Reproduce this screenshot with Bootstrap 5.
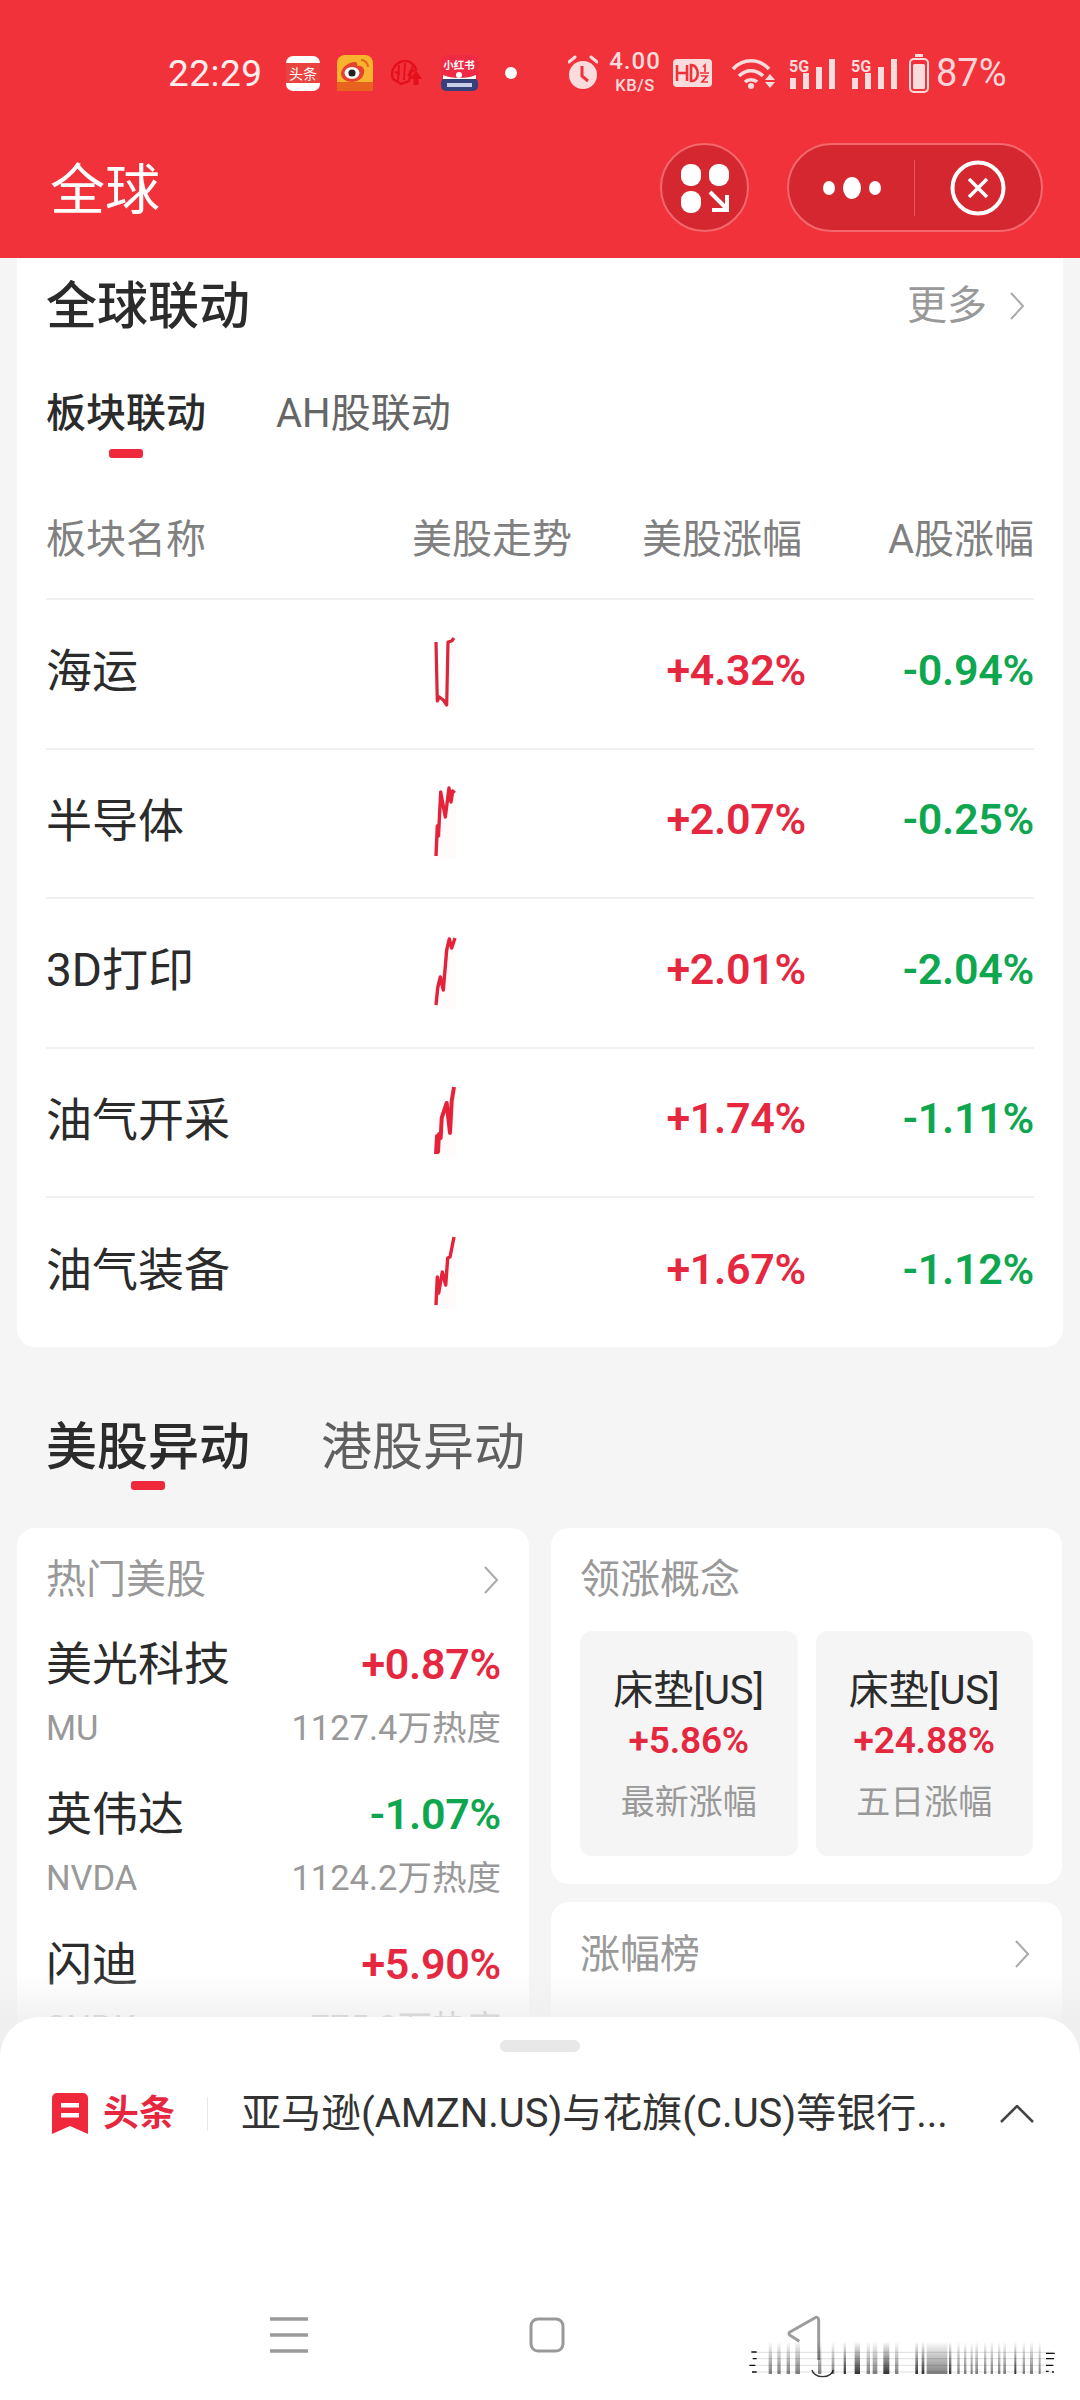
<!DOCTYPE html>
<html lang="zh-CN">
<head>
<meta charset="utf-8">
<title>全球</title>
<link rel="stylesheet" href="https://cdn.jsdelivr.net/npm/bootstrap@5.3.0/dist/css/bootstrap.min.css">
<style>
html,body{width:1080px;height:2400px;overflow:hidden}
body{position:relative;background:#f5f5f5;font-family:Roboto,"Noto Sans CJK SC",sans-serif;color:#333}
.hdr{background:#f1323b;height:258px;color:#fff}
.stat{height:143px;padding:3px 0 0 168px;color:#fff}
.clock{font-size:37px;width:118px;line-height:1;letter-spacing:.5px;color:#fdeeee}
.sico{display:block;flex:none}
.netb{width:52px;margin:0 12px 0 11px;text-align:center;color:#fbdcdc;font-weight:500}
.netb b{display:block;font-size:24px;line-height:25px;letter-spacing:1px;font-weight:500}
.netb i{display:block;font-size:16.5px;line-height:23px;letter-spacing:.5px;font-style:normal;font-weight:500}
.pct{font-size:38px;line-height:1;color:#fbd6d8;margin-left:7px}
.ttl{padding:0 37px 0 50px;height:89px}
.ttl h1{font-size:55px;font-weight:400;margin:6px 0 0;line-height:1;color:#fff}
.cbtn{width:89px;height:89px;background:#d4272f;border:2px solid #f4686d;border-radius:50%}
.capsule{width:256px;height:89px;background:#d4272f;border:2px solid #f4686d;border-radius:45px;margin-left:38px}
.capsep{width:1px;height:56px;background:#e7565b}
.panel{background:#fff;margin:0 17px;border-radius:0 0 18px 18px;height:1089px;padding:0 29px}
.phead{height:96px}
.phead h2{font-size:51px;font-weight:500;color:#2b2b2b;margin:0;line-height:1}
.more{font-size:40px;color:#999;line-height:1;gap:22px;margin-right:9px}
.tabline{height:120px;gap:70px}
.tabit{font-size:40px;line-height:1;color:#666;position:relative}
.tabit.on{color:#2b2b2b;font-weight:500}
.tabit.on::after{content:"";position:absolute;left:50%;bottom:-24px;width:34px;height:9px;margin-left:-17px;border-radius:3px;background:#f0283c}
.thead{height:126px;padding-top:8px;font-size:40px;color:#808080;border-bottom:2px solid #f0f0f0}
.thead .c3{padding-right:4px}
.trow{height:149.5px;border-bottom:2px solid #f0f0f0}
.trow:last-child{border-bottom:0}
.c1{width:360px}
.c2{width:166px}
.c3{width:234px;text-align:right}
.c4{width:228px;text-align:right}
.trow .c1{font-size:46px;color:#2b2b2b;line-height:1;margin-bottom:5px}
.trow .c3,.trow .c4{font-size:43px;font-weight:600;line-height:1;letter-spacing:-.3px;margin-bottom:7px}
.up{color:#e5283f}
.down{color:#0ea750}
.spk{display:block;margin-left:14px}
.mkt{padding:20px 46px 0;height:181px;gap:71px}
.mkt span{font-size:51px;line-height:1;color:#5f5f5f;position:relative}
.mkt span.on{color:#2b2b2b;font-weight:500}
.mkt span.on::after{content:"";position:absolute;left:50%;bottom:-17px;width:34px;height:9px;margin-left:-17px;border-radius:3px;background:#f0283c}
.cols{padding:0 18px 0 17px;gap:22px}
.lcard{width:512px;background:#fff;border-radius:18px 18px 0 0;height:520px;padding:0 28px 0 29px}
.rside{width:511px}
.rcard{background:#fff;border-radius:18px;height:356px;padding:0 29px}
.rcard2{background:#fff;border-radius:18px 18px 0 0;height:200px;margin-top:18px;padding:33px 32px 0 29px}
.ch{font-size:40px;color:#999;line-height:1}
.lhead{height:104px;margin-bottom:7px;padding-right:2px}
.stock{height:150px;padding-top:2px}
.stock .nm{font-size:46px;line-height:1;color:#2b2b2b}
.stock .vl{font-size:43px;line-height:1;font-weight:600;letter-spacing:-.3px}
.stock .sub{font-size:34.5px;line-height:1;color:#999;margin-top:24px}
.rhead{height:103px}
.tiles{gap:18px}
.tile{width:218px;height:225px;background:#f5f5f5;border-radius:12px;padding-top:40px;text-align:center}
.tile .a{font-size:40px;line-height:1;color:#2b2b2b}
.tile .b{font-size:37px;line-height:1;font-weight:600;margin-top:11px;letter-spacing:-.2px}
.tile .c{font-size:34px;line-height:1;color:#999;margin-top:26px}
.shade{position:absolute;left:0;right:0;top:1975px;height:80px;background:linear-gradient(rgba(238,238,238,0),rgba(238,238,238,.8) 55%)}
.sheet{position:absolute;left:0;right:0;top:2017px;height:383px;background:#fff;border-radius:40px 40px 0 0}
.grip{width:80px;height:12px;background:#e8e8e8;border-radius:6px;margin:23px auto 0}
.news{height:124px;padding:0 46px 0 52px}
.tt{color:#e5283f;font-size:36px;font-weight:700;line-height:1;margin-left:15px;width:104px}
.vsep{width:1px;height:34px;background:#e8e8e8;margin-right:33px}
.ntx{font-size:40px;line-height:1;color:#333;width:759px;white-space:nowrap}
.navb{position:absolute;left:0;top:300px;width:100%}
.wmark{position:absolute;left:740px;top:2300px}
</style>
</head>
<body>
<header class="hdr">
  <div class="stat d-flex align-items-center">
    <span class="clock">22:29</span>
    <svg class="sico" width="34" height="35" viewBox="0 0 34 35"><rect width="34" height="35" rx="7" fill="#fff"/><rect y="7" width="34" height="20" fill="#e9433f"/><text x="17" y="23" font-size="14" font-family="Noto Sans CJK SC" fill="#fff" text-anchor="middle">头条</text></svg>
    <svg class="sico" style="margin-left:17px" width="36" height="36" viewBox="0 0 36 36"><rect width="36" height="36" rx="8" fill="#f9b42d"/><rect y="27" width="36" height="9" fill="#e8641e"/><path d="M4 19c0-6 7-12 14-12 2 0 3 2 2 4 5-1 8 2 7 7-1 6-7 9-12 9S4 24 4 19z" fill="#e6432f"/><ellipse cx="15" cy="18" rx="7.5" ry="6" fill="#fff"/><circle cx="15" cy="18" r="3.6" fill="#222"/><path d="M24 5a7 7 0 0 1 7 7" stroke="#e8641e" stroke-width="2" fill="none"/></svg>
    <svg class="sico" style="margin-left:17px" width="33" height="27" viewBox="0 0 33 27"><path d="M3 19C0 11 5 3 13 1c6-1 11 3 13 8l-5 3-2 9-8 3z" fill="none" stroke="#e4101c" stroke-width="2.4"/><path d="M8 21 9 5M14 20l1-17M18 16l5-10M5 12l5 2" stroke="#e4101c" stroke-width="2"/><path d="M26 10l6 9h-3.5v6h-5v-6H20z" fill="#e4101c"/></svg>
    <svg class="sico" style="margin-left:18px" width="37" height="36" viewBox="0 0 37 36"><rect width="37" height="36" rx="7" fill="#ee2a44"/><rect y="23" width="37" height="13" rx="5" fill="#36407a"/><path d="M2 20c8 4 25 4 33 0v4H2z" fill="#fff"/><circle cx="18" cy="20" r="3" fill="#fff"/><text x="18" y="14" font-size="10.5" font-weight="700" font-family="Noto Sans CJK SC" fill="#fff" text-anchor="middle">小红书</text><rect x="6" y="28" width="25" height="4" fill="#c9cde6"/></svg>
    <svg class="sico" style="margin-left:27px" width="12" height="12" viewBox="0 0 12 12"><circle cx="6" cy="6" r="6" fill="#fff"/></svg>
    <svg class="sico" style="margin-left:51px" width="30" height="36" viewBox="0 0 30 36"><path d="M1 7 7 2M29 7l-6-5" stroke="#fbdcdc" stroke-width="3" stroke-linecap="round"/><circle cx="15" cy="20" r="14" fill="#fbdcdc"/><path d="M14 11v10l6 5" stroke="#f1323b" stroke-width="3" fill="none"/></svg>
    <div class="netb"><b>4.00</b><i>KB/S</i></div>
    <svg class="sico" width="39" height="28" viewBox="0 0 39 28"><rect width="39" height="28" rx="4" fill="#fbdcdc"/><path d="M4 6v16M14 6v16M4 14h10M18 6v16c9 1 9-16 0-16z" stroke="#f1323b" stroke-width="2.6" fill="none"/><path d="M30 8l2-2v7M27 14h9M28 17h6l-5 6h6" stroke="#f1323b" stroke-width="1.7" fill="none"/></svg>
    <svg class="sico" style="margin-left:19px" width="45" height="31" viewBox="0 0 45 31"><path d="M2 11c10-11 26-11 36 0M8 18c7-7 17-7 24 0M14 24c3-3 9-3 12 0" stroke="#fbdcdc" stroke-width="3.6" fill="none"/><circle cx="20" cy="28" r="3" fill="#fbdcdc"/><path d="M39 16l5 6H34zM34 24h10l-5 6z" fill="#fbdcdc"/></svg>
    <svg class="sico" style="margin-left:13px" width="47" height="36" viewBox="0 0 47 36"><text x="0" y="17" font-size="16" font-weight="700" font-family="Roboto" fill="#fbdcdc">5G</text><rect x="1" y="23" width="6" height="11" fill="#fbdcdc"/><rect x="14" y="18" width="6" height="16" fill="#fbdcdc"/><rect x="27" y="12" width="6" height="22" fill="#fbdcdc"/><rect x="40" y="4" width="6" height="30" fill="#fbdcdc"/></svg>
    <svg class="sico" style="margin-left:15px" width="47" height="36" viewBox="0 0 47 36"><text x="0" y="17" font-size="16" font-weight="700" font-family="Roboto" fill="#fbdcdc">5G</text><rect x="1" y="23" width="6" height="11" fill="#fbdcdc"/><rect x="14" y="18" width="6" height="16" fill="#fbdcdc"/><rect x="27" y="12" width="6" height="22" fill="#fbdcdc"/><rect x="40" y="4" width="6" height="30" fill="#fbdcdc"/></svg>
    <svg class="sico" style="margin-left:11px" width="20" height="39" viewBox="0 0 20 39"><rect x="6" y="0" width="8" height="3" fill="#fbdcdc"/><rect x="1" y="5" width="18" height="33" rx="4" fill="none" stroke="#fbdcdc" stroke-width="2"/><rect x="4" y="10" width="12" height="25" rx="1.5" fill="#fbdcdc"/></svg>
    <span class="pct">87%</span>
  </div>
  <div class="ttl d-flex align-items-center">
    <h1 class="flex-grow-1">全球</h1>
    <div class="cbtn d-flex align-items-center justify-content-center">
      <svg width="50" height="50" viewBox="0 0 50 50"><rect x="1" y="1" width="20" height="22" rx="9" fill="#fff"/><rect x="29" y="1" width="20" height="22" rx="9" fill="#fff"/><rect x="1" y="28" width="20" height="22" rx="9" fill="#fff"/><path d="M30 29l16 16M47 32v15H32" stroke="#fff" stroke-width="4" fill="none"/></svg>
    </div>
    <div class="capsule d-flex align-items-center">
      <svg style="margin:0 33px 0 34px" width="58" height="24" viewBox="0 0 58 24"><ellipse cx="6" cy="12" rx="6" ry="7" fill="#fff"/><ellipse cx="29" cy="12" rx="9" ry="11" fill="#fff"/><ellipse cx="52" cy="12" rx="6" ry="7" fill="#fff"/></svg>
      <span class="capsep"></span>
      <svg style="margin-left:35px" width="56" height="56" viewBox="0 0 56 56"><circle cx="28" cy="28" r="25.5" stroke="#fff" stroke-width="4" fill="none"/><path d="M19 19l18 18M37 19 19 37" stroke="#fff" stroke-width="3.5"/></svg>
    </div>
  </div>
</header>

<section class="panel">
  <div class="phead d-flex align-items-center justify-content-between">
    <h2>全球联动</h2>
    <div class="more d-flex align-items-center">更多<svg width="16" height="30" viewBox="0 0 16 30"><path d="M2 2l12 13L2 28" stroke="#aaa" stroke-width="2" fill="none"/></svg></div>
  </div>
  <div class="tabline d-flex align-items-center">
    <span class="tabit on">板块联动</span>
    <span class="tabit">AH股联动</span>
  </div>
  <div class="thead d-flex align-items-center">
    <div class="c1">板块名称</div><div class="c2 text-end">美股走势</div><div class="c3">美股涨幅</div><div class="c4">A股涨幅</div>
  </div>
  <div class="trow d-flex align-items-center">
    <div class="c1">海运</div>
    <div class="c2"><svg class="spk" width="60" height="100" viewBox="0 0 60 100"><polygon points="16,18 17.3,77 26.7,81 28,18 36,14 36,86 16,86" fill="#fde9ea" opacity=".2"/><polyline points="16,18 17.3,77 19.3,73 23.3,76 26.7,81 28,18 31.7,17 34,14" fill="none" stroke="#d9263a" stroke-width="3.2" stroke-linejoin="round"/></svg></div>
    <div class="c3 up">+4.32%</div><div class="c4 down">-0.94%</div>
  </div>
  <div class="trow d-flex align-items-center">
    <div class="c1">半导体</div>
    <div class="c2"><svg class="spk" width="60" height="100" viewBox="0 0 60 100"><polygon points="16,83 20.7,19 29,15 36,20 36,86 16,86" fill="#fde9ea" opacity=".2"/><polyline points="16,83 17.3,53 18.5,63 20.7,19 25.3,44 29,15 31,29 32.7,18 34.7,20" fill="none" stroke="#e4233a" stroke-width="3.4" stroke-linejoin="round"/></svg></div>
    <div class="c3 up">+2.07%</div><div class="c4 down">-0.25%</div>
  </div>
  <div class="trow d-flex align-items-center">
    <div class="c1">3D打印</div>
    <div class="c2"><svg class="spk" width="60" height="100" viewBox="0 0 60 100"><polygon points="16,82 20,54 27,27 36,15 36,86 16,86" fill="#fde9ea" opacity=".2"/><polyline points="16,82 17.7,65 20.3,54 23.3,67 26.7,27 29.3,16 31.7,25 35,15" fill="none" stroke="#e4233a" stroke-width="3.4" stroke-linejoin="round"/></svg></div>
    <div class="c3 up">+2.01%</div><div class="c4 down">-2.04%</div>
  </div>
  <div class="trow d-flex align-items-center">
    <div class="c1">油气开采</div>
    <div class="c2"><svg class="spk" width="60" height="100" viewBox="0 0 60 100"><polygon points="16,82 20.7,62 26.7,31 36,15 36,86 16,86" fill="#fde9ea" opacity=".2"/><polyline points="16,82 17,64 18,80 19,62 20.7,66 21.7,46 26.7,31 28.3,46 30,61 31.7,29 34,15" fill="none" stroke="#e4233a" stroke-width="4" stroke-linejoin="round"/></svg></div>
    <div class="c3 up">+1.74%</div><div class="c4 down">-1.11%</div>
  </div>
  <div class="trow d-flex align-items-center">
    <div class="c1">油气装备</div>
    <div class="c2"><svg class="spk" width="60" height="100" viewBox="0 0 60 100"><polygon points="16,82 22.3,49 30,34 36,14 36,86 16,86" fill="#fde9ea" opacity=".2"/><polyline points="16,82 17.3,54 18.7,70 22.3,49 25.7,62 27.7,35 30,34 34,14" fill="none" stroke="#e4233a" stroke-width="3.4" stroke-linejoin="round"/></svg></div>
    <div class="c3 up">+1.67%</div><div class="c4 down">-1.12%</div>
  </div>
</section>

<div class="mkt d-flex align-items-center">
  <span class="on">美股异动</span>
  <span>港股异动</span>
</div>

<div class="cols d-flex">
  <div class="lcard">
    <div class="lhead d-flex align-items-center justify-content-between ch">热门美股<svg width="16" height="30" viewBox="0 0 16 30"><path d="M2 2l12 13L2 28" stroke="#aaa" stroke-width="2" fill="none"/></svg></div>
    <div class="stock"><div class="d-flex align-items-center justify-content-between"><span class="nm">美光科技</span><span class="vl up">+0.87%</span></div><div class="sub d-flex justify-content-between"><span>MU</span><span>1127.4万热度</span></div></div>
    <div class="stock"><div class="d-flex align-items-center justify-content-between"><span class="nm">英伟达</span><span class="vl down">-1.07%</span></div><div class="sub d-flex justify-content-between"><span>NVDA</span><span>1124.2万热度</span></div></div>
    <div class="stock"><div class="d-flex align-items-center justify-content-between"><span class="nm">闪迪</span><span class="vl up">+5.90%</span></div><div class="sub d-flex justify-content-between"><span>SNDK</span><span>775.8万热度</span></div></div>
  </div>
  <div class="rside">
    <div class="rcard">
      <div class="rhead d-flex align-items-center ch">领涨概念</div>
      <div class="tiles d-flex">
        <div class="tile"><div class="a">床垫[US]</div><div class="b up">+5.86%</div><div class="c">最新涨幅</div></div>
        <div class="tile"><div class="a">床垫[US]</div><div class="b up">+24.88%</div><div class="c">五日涨幅</div></div>
      </div>
    </div>
    <div class="rcard2 d-flex justify-content-between align-items-start ch">涨幅榜<svg class="mt-1" width="16" height="30" viewBox="0 0 16 30"><path d="M2 2l12 13L2 28" stroke="#aaa" stroke-width="2" fill="none"/></svg></div>
  </div>
</div>

<div class="shade"></div>
<div class="sheet">
  <div class="grip"></div>
  <div class="news d-flex align-items-center">
    <svg width="36" height="42" viewBox="0 0 36 42"><path d="M0 5a5 5 0 0 1 5-5h26a5 5 0 0 1 5 5v36L18 33 0 41z" fill="#f0283c"/><rect x="9" y="10" width="18" height="4.5" fill="#fff"/><rect x="9" y="20" width="18" height="4.5" fill="#fff"/></svg>
    <span class="tt">头条</span>
    <span class="vsep"></span>
    <span class="ntx">亚马逊(AMZN.US)与花旗(C.US)等银行...</span>
    <svg width="34" height="18" viewBox="0 0 34 18"><path d="M1 17 17 1l16 16" stroke="#444" stroke-width="2.5" fill="none"/></svg>
  </div>
  <div class="navb d-flex">
    <svg style="margin-left:270px" width="38" height="36" viewBox="0 0 38 36"><path d="M0 2h38M0 18h38M0 34h38" stroke="#999" stroke-width="3.5"/></svg>
    <svg style="margin-left:221px" width="36" height="36" viewBox="0 0 36 36"><rect x="2" y="2" width="32" height="32" rx="7" fill="none" stroke="#999" stroke-width="3"/></svg>
  </div>
</div>
<svg class="wmark" width="330" height="90" viewBox="0 0 990 270">
  <defs>
    <linearGradient id="bg" x1="0" y1="0" x2="0" y2="1"><stop offset="0" stop-color="#000" stop-opacity="0"/><stop offset="1" stop-color="#000" stop-opacity=".8"/></linearGradient>
    <linearGradient id="bgl" x1="0" y1="0" x2="0" y2="1"><stop offset="0" stop-color="#000" stop-opacity="0"/><stop offset=".5" stop-color="#000" stop-opacity=".25"/><stop offset="1" stop-color="#000" stop-opacity=".5"/></linearGradient>
  </defs>
  <path d="M236 180V60c0-8-6-10-12-6L150 96c-4 3-4 7 0 10l28 18" fill="none" stroke="#9c9c9c" stroke-width="9" stroke-linejoin="round"/>
  <path d="M216 210c2 10 14 20 32 20s30-10 32-20" fill="none" stroke="#333" stroke-width="4"/>
  <g fill="url(#bgl)">
    <rect x="86" y="125" width="10" height="97"/><rect x="112" y="125" width="10" height="97"/><rect x="140" y="125" width="10" height="97"/><rect x="166" y="120" width="14" height="102"/><rect x="234" y="125" width="10" height="97"/><rect x="275" y="125" width="8" height="97"/><rect x="380" y="125" width="10" height="97"/><rect x="398" y="125" width="14" height="97"/><rect x="465" y="125" width="10" height="97"/><rect x="560" y="125" width="62" height="97"/><rect x="652" y="125" width="7" height="97"/><rect x="672" y="125" width="7" height="97"/><rect x="692" y="125" width="6" height="97"/><rect x="706" y="125" width="8" height="97"/><rect x="732" y="125" width="7" height="97"/><rect x="752" y="125" width="7" height="97"/><rect x="774" y="125" width="7" height="97"/><rect x="790" y="125" width="8" height="97"/><rect x="848" y="125" width="7" height="97"/><rect x="870" y="125" width="9" height="97"/><rect x="896" y="125" width="6" height="97"/>
  </g>
  <g fill="url(#bg)">
    <rect x="311" y="125" width="7" height="97"/><rect x="344" y="125" width="16" height="97"/><rect x="430" y="125" width="18" height="97"/><rect x="526" y="125" width="8" height="97"/><rect x="545" y="125" width="8" height="97"/><rect x="627" y="125" width="7" height="97"/><rect x="823" y="125" width="6" height="97"/>
  </g>
  <g stroke="#000" stroke-opacity=".13" stroke-width="3">
    <path d="M40 157H940M40 176H940M30 196H940M36 216H940"/>
  </g>
  <g stroke="#111" stroke-width="4">
    <path d="M34 156h16M38 176h12M28 196h18M36 216h14M918 160h26M918 176h24M918 196h22M918 214h8M936 216h6"/>
  </g>
</svg>
<script src="https://cdn.jsdelivr.net/npm/bootstrap@5.3.0/dist/js/bootstrap.bundle.min.js"></script>
</body>
</html>
